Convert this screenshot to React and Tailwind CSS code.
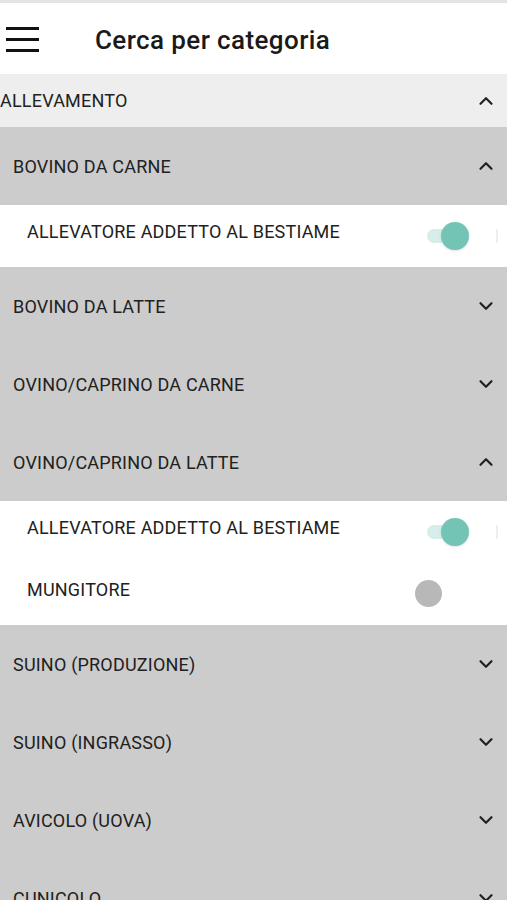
import { ChevronDown, ChevronUp } from "lucide-react";

const SECTIONS = [
  { label: "BOVINO DA CARNE", open: true, items: [{ label: "ALLEVATORE ADDETTO AL BESTIAME", on: true }] },
  { label: "BOVINO DA LATTE" },
  { label: "OVINO/CAPRINO DA CARNE" },
  {
    label: "OVINO/CAPRINO DA LATTE",
    open: true,
    items: [
      { label: "ALLEVATORE ADDETTO AL BESTIAME", on: true },
      { label: "MUNGITORE", on: false }
    ]
  },
  { label: "SUINO (PRODUZIONE)" },
  { label: "SUINO (INGRASSO)" },
  { label: "AVICOLO (UOVA)" },
  { label: "CUNICOLO" }
];

const Toggle = ({ on }) => (
  <div className="relative h-[28px] w-[46px]">
    {on ? (
      <>
        <div className="absolute left-0 top-[7px] h-[14px] w-[38px] rounded-full bg-[#d5eee9]" />
        <div className="absolute left-[14px] top-0 h-[28px] w-[28px] rounded-full bg-[#73c4b4] shadow-sm" />
      </>
    ) : (
      <div className="absolute left-[-12px] top-0 h-[27px] w-[27px] rounded-full bg-[#b8b8b8]" />
    )}
  </div>
);

export default function App() {
  return (
    <div className="h-[900px] w-[507px] overflow-hidden bg-[#cccccc] text-[#212121]" style={{ fontFamily: "Roboto, 'Liberation Sans', sans-serif" }}>
      {/* Header */}
      <div className="h-[3px] bg-[#e4e4e4]" />
      <div className="flex h-[71px] items-center bg-white">
        <div className="ml-[6px] flex w-[33px] flex-col gap-[8px] pt-[2px]">
          <span className="h-[3px] bg-[#111]" />
          <span className="h-[3px] bg-[#111]" />
          <span className="h-[3px] bg-[#111]" />
        </div>
        <h1 className="ml-[56px] mt-[2px] text-[26px] font-medium leading-none tracking-[0.4px] text-[#1a1a1a]">Cerca per categoria</h1>
      </div>

      {/* Top category */}
      <div className="flex h-[53px] items-center justify-between bg-[#eeeeee] pr-[10px]">
        <span className="text-[18px] tracking-[0.2px]">ALLEVAMENTO</span>
        <ChevronUp className="h-[22px] w-[22px]" strokeWidth={2.4} />
      </div>

      {SECTIONS.map((s) => (
        <div key={s.label}>
          <div className="flex h-[78px] items-center justify-between bg-[#cccccc] pl-[13px] pr-[10px]">
            <span className="text-[18px] tracking-[0.2px]">{s.label}</span>
            {s.open ? (
              <ChevronUp className="h-[22px] w-[22px]" strokeWidth={2.4} />
            ) : (
              <ChevronDown className="h-[22px] w-[22px]" strokeWidth={2.4} />
            )}
          </div>
          {s.open &&
            s.items.map((it) => (
              <div key={it.label} className="relative flex h-[62px] items-center justify-between bg-white pl-[27px]">
                <span className="-mt-[9px] text-[18px] tracking-[0.2px]">{it.label}</span>
                <div className="mr-[34px]">
                  <Toggle on={it.on} />
                </div>
                {it.on && <span className="absolute right-[9px] top-[24px] h-[14px] w-[2px] rounded bg-[#eeeeee]" />}
              </div>
            ))}
        </div>
      ))}
    </div>
  );
}
